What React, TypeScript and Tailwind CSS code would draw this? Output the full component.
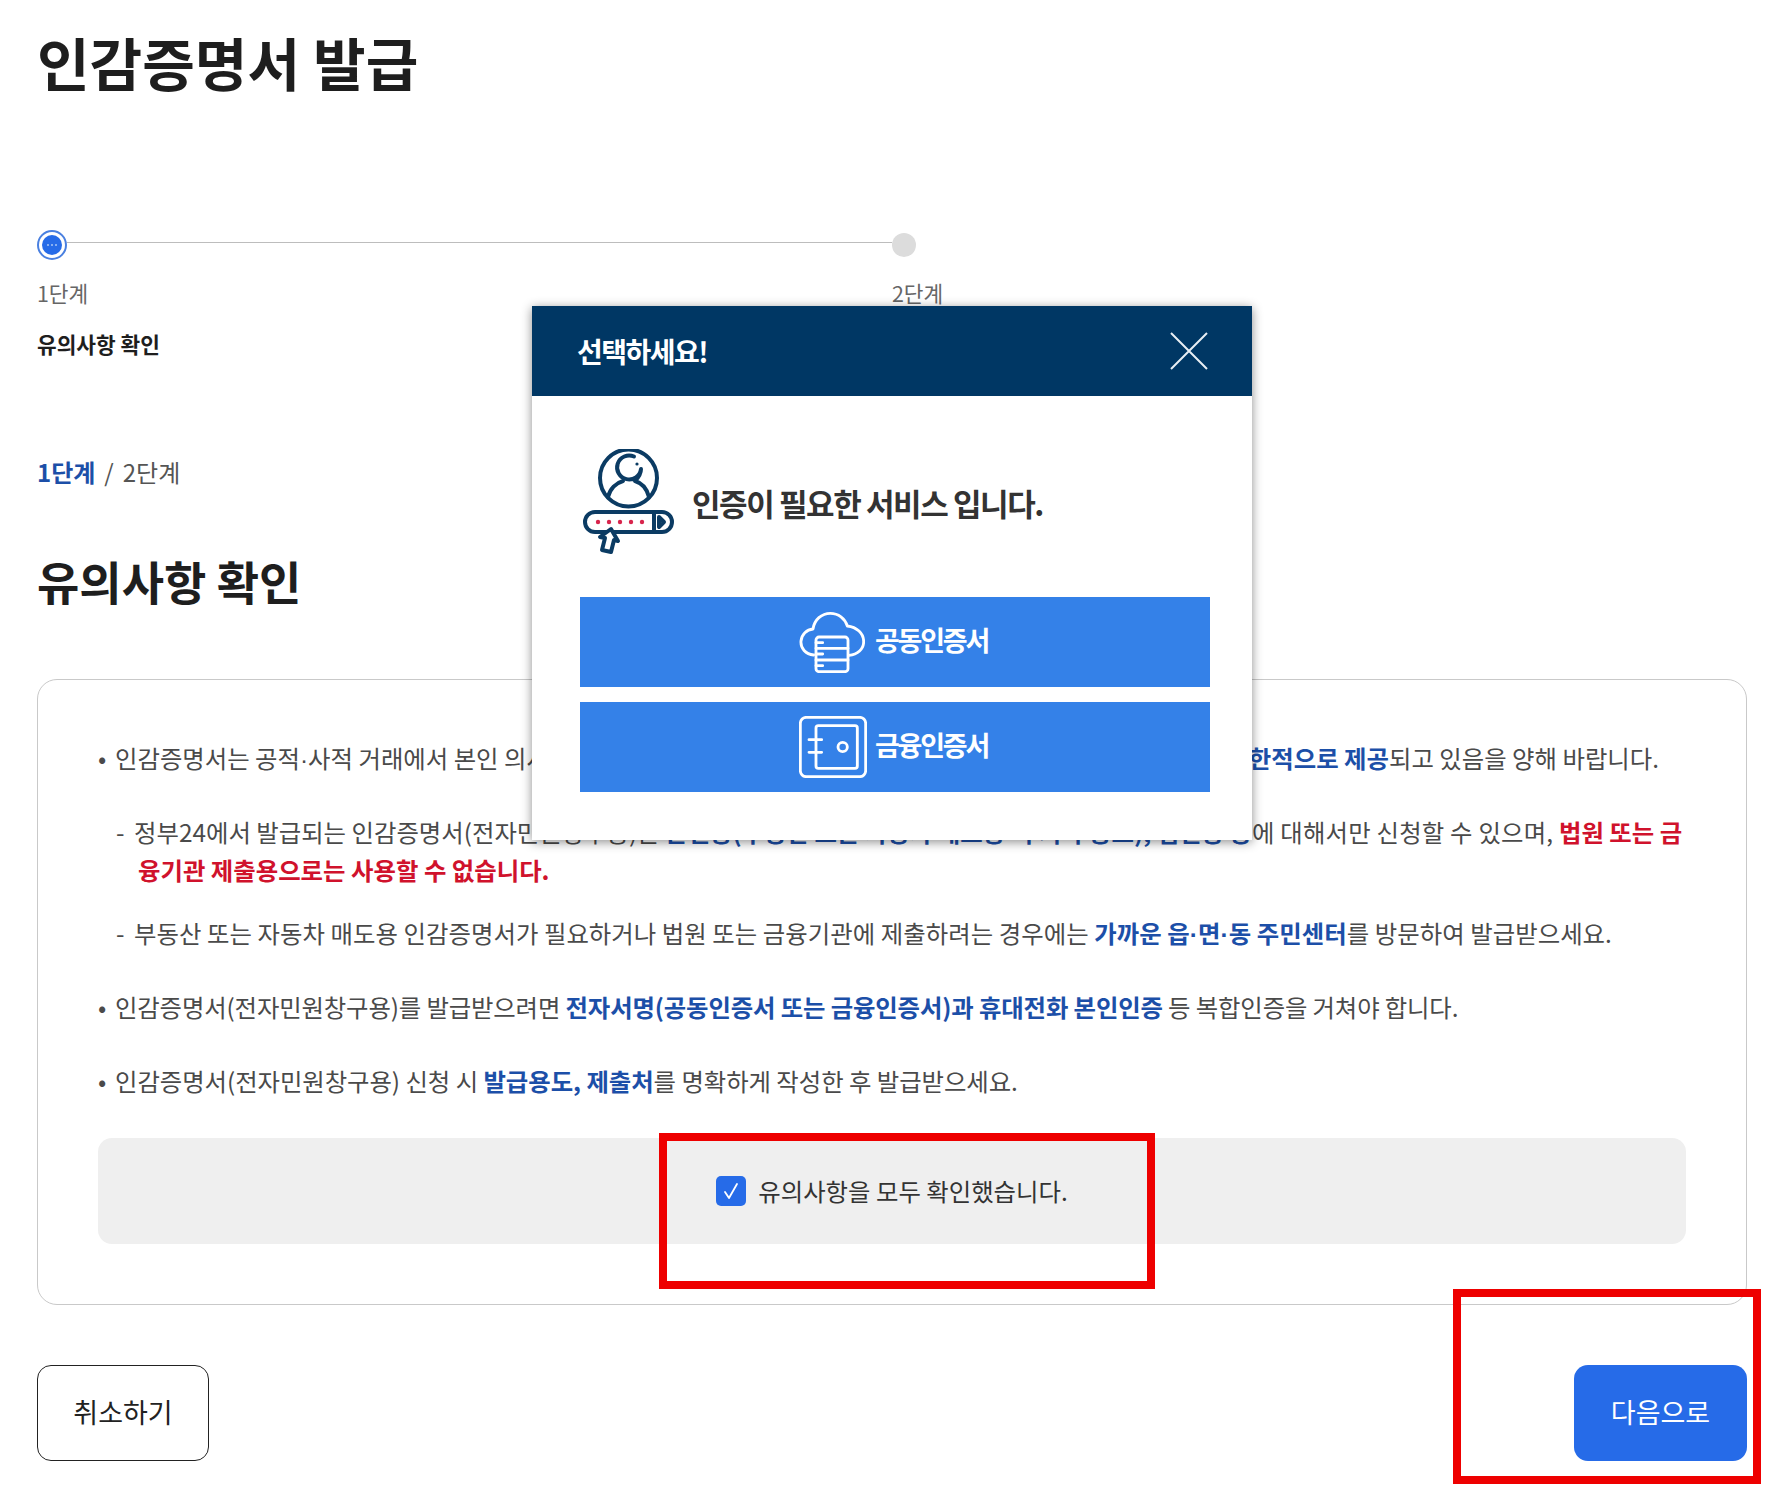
import React from "react";

const font = { fontFamily: '"Noto Sans CJK KR", "Noto Sans", sans-serif' };

function Dot() {
  return <span className="font-['Liberation_Sans'] leading-none">·</span>;
}

function PersonIcon() {
  return (
    <svg width="92" height="108" viewBox="11 10 92 108" fill="none" stroke="#0b3b63" strokeWidth="4" strokeLinecap="round" strokeLinejoin="round">
      <circle cx="57.5" cy="39" r="28.5" />
      <path d="M63 17.5A12 12 0 1 0 70 30c0 5-3 9-6 12 7 2 12 8 14 16" />
      <path d="M52 42c-7 2-13 8-15 16" />
      <circle cx="66" cy="25" r="1.6" fill="#0b3b63" stroke="none" />
      <rect x="14" y="73" width="87" height="20" rx="10" />
      <path d="M83 73v20" />
      <path d="M88 78l5 5-5 5z" />
      <g fill="#d8244c" stroke="none">
        <circle cx="27" cy="83" r="2.2" />
        <circle cx="38" cy="83" r="2.2" />
        <circle cx="49" cy="83" r="2.2" />
        <circle cx="60" cy="83" r="2.2" />
        <circle cx="71" cy="83" r="2.2" />
      </g>
      <path d="M40 90l7 12-4-1-3 12-9-2 3-12-5-1z" fill="#fff" />
    </svg>
  );
}

function CloudIcon() {
  return (
    <svg width="66" height="62" viewBox="24 34 198 186" fill="none" stroke="#fff" strokeWidth="8.5" strokeLinecap="round" strokeLinejoin="round">
      <path d="M68 166C44 164 28 146 30 124c2-20 17-34 36-36 4-28 26-47 52-47 24 0 44 15 51 38 28 3 49 22 49 47 0 22-18 39-44 41" />
      <rect x="75" y="112" width="96" height="104" rx="9" fill="#3481e8" />
      <path d="M75 146h96M75 181h96M75 129h20M75 163h20M75 198h20" />
    </svg>
  );
}

function SafeIcon() {
  return (
    <svg width="68" height="62" viewBox="26 44 204 186" fill="none" stroke="#fff" strokeWidth="8.5" strokeLinecap="round" strokeLinejoin="round">
      <rect x="30" y="48" width="196" height="178" rx="18" />
      <rect x="77" y="73" width="124" height="128" rx="7" />
      <path d="M56 115h38M56 153h38" />
      <circle cx="157" cy="137" r="14" />
    </svg>
  );
}

export default function App() {
  return (
    <div className="relative w-[1789px] h-[1506px] bg-white overflow-hidden" style={font}>
      <div className="pl-[37px] w-[1747px]">
        <h1 className="pt-[29px] text-[57.2px] leading-[64px] font-bold text-[#1e1e1e]">인감증명서 발급</h1>

        <div className="mt-[137px] flex">
          <div className="w-[855px]">
            <div className="flex h-[30px]">
              <div className="w-[30px] h-[30px] shrink-0 rounded-full border-2 border-[#4a80e0] bg-white flex items-center justify-center">
                <div className="w-[20px] h-[20px] rounded-full bg-[#266be8] flex items-center justify-center gap-[2px]">
                  <span className="w-[2px] h-[2px] rounded-full bg-[#a9c6f5]" />
                  <span className="w-[2px] h-[2px] rounded-full bg-[#a9c6f5]" />
                  <span className="w-[2px] h-[2px] rounded-full bg-[#a9c6f5]" />
                </div>
              </div>
              <div className="flex-1 h-px mt-[12px] bg-[#bdbdbd]" />
            </div>
            <p className="mt-[17px] text-[21.4px] leading-[32px] text-[#666]">1단계</p>
            <p className="mt-[19px] text-[21.4px] leading-[32px] font-bold text-[#1e1e1e]">유의사항 확인</p>
          </div>
          <div>
            <div className="h-[30px] pt-[3px]">
              <div className="w-[24px] h-[24px] rounded-full bg-[#dcdcdc]" />
            </div>
            <p className="mt-[17px] text-[21.4px] leading-[32px] text-[#666]">2단계</p>
          </div>
        </div>

        <p className="mt-[94px] text-[24px] leading-[36px] text-[#555]">
          <b className="text-[#1c4fa8]">1단계</b>
          <span className="mx-[9px]">/</span>2단계
        </p>

        <h2 className="mt-[60px] text-[46px] leading-[60px] font-bold text-[#1e1e1e]">유의사항 확인</h2>

        <div className="mt-[69px] h-[626px] border border-[#c9c9c9] rounded-[20px] pt-[59px] px-[60px]">
          <div className="text-[24.4px] leading-[38px] text-[#4a4a4a]">
            <div className="relative pl-[17px] break-all">
              <span className="absolute left-0 top-0">•</span>
              인감증명서는 공적<Dot />사적 거래에서 본인 의사를 확인하는 중요한 수단으로 활용되는 증명서로 현재 온라인 발급은 제<b className="text-[#1c4fa8]">한적으로 제공</b>되고 있음을 양해 바랍니다.
            </div>
            <div className="relative pl-[40px] mt-[36px] break-all">
              <span className="absolute left-[18px] top-0">-</span>
              <span className="-ml-[4px]">정부24에서 발급되는 인감증명서(전자민원창구용)는 </span>
              <b className="text-[#1c4fa8]">본인용(부동산 또는 자동차 매도용 외 기타 용도), 법인용 등</b><span className="tracking-[0.2px]">에 대해서만 신청할 수 있으며, </span><b className="text-[#d0122c]">법원 또는 금융기관 제출용으로는 사용할 수 없습니다.</b>
            </div>
            <div className="relative pl-[36px] mt-[25px] break-all tracking-[0.05px]">
              <span className="absolute left-[18px] top-0">-</span>
              부동산 또는 자동차 매도용 인감증명서가 필요하거나 법원 또는 금융기관에 제출하려는 경우에는 <b className="text-[#1c4fa8]">가까운 읍<Dot />면<Dot />동 주민센터</b>를 방문하여 발급받으세요.
            </div>
            <div className="relative pl-[17px] mt-[36px] tracking-[-0.14px]">
              <span className="absolute left-0 top-0">•</span>
              인감증명서(전자민원창구용)를 발급받으려면 <b className="text-[#1c4fa8]">전자서명(공동인증서 또는 금융인증서)과 휴대전화 본인인증</b> 등 복합인증을 거쳐야 합니다.
            </div>
            <div className="relative pl-[17px] mt-[36px] tracking-[-0.05px]">
              <span className="absolute left-0 top-0">•</span>
              인감증명서(전자민원창구용) 신청 시 <b className="text-[#1c4fa8]">발급용도, 제출처</b>를 명확하게 작성한 후 발급받으세요.
            </div>
          </div>
          <div className="mt-[38px] h-[106px] rounded-[14px] bg-[#efefef] flex justify-center items-start pt-[38px]">
            <div className="flex items-center gap-[12px]">
              <div className="w-[30px] h-[30px] rounded-[5px] bg-[#266be8] flex items-center justify-center">
                <svg width="20" height="22" viewBox="0 0 20 22" fill="none" stroke="#fff" strokeWidth="1.8" strokeLinecap="round" strokeLinejoin="round">
                  <path d="M4 12l4 6 8-14" />
                </svg>
              </div>
              <span className="text-[24.4px] leading-[30px] text-[#333]">유의사항을 모두 확인했습니다.</span>
            </div>
          </div>
        </div>

        <div className="mt-[60px] flex justify-between">
          <button className="w-[172px] h-[96px] pb-[2px] rounded-[14px] border border-[#222] bg-white text-[27px] text-[#222]">취소하기</button>
          <button className="w-[173px] h-[96px] pb-[2px] rounded-[14px] bg-[#266be8] text-[27px] text-white">다음으로</button>
        </div>
      </div>

      <div className="absolute left-[532px] top-[306px] w-[720px] h-[534px] bg-white shadow-[0_2px_10px_rgba(0,0,0,0.45)]">
        <div className="h-[90px] bg-[#003764] flex items-center justify-between pl-[45px] pr-[44px]">
          <span className="text-[28px] font-bold tracking-[-1.5px] text-white">선택하세요!</span>
          <svg width="38" height="38" viewBox="0 0 38 38" stroke="#e8eef4" strokeWidth="2">
            <path d="M1 1l36 36M37 1L1 37" />
          </svg>
        </div>
        <div className="pl-[50px] pt-[54px] flex items-center gap-[18px] h-[160px]">
          <PersonIcon />
          <span className="text-[31px] font-bold tracking-[-1.4px] text-[#333]">인증이 필요한 서비스 입니다.</span>
        </div>
        <div className="mt-[41px] ml-[48px] w-[630px] flex flex-col gap-[15px]">
          <div className="h-[90px] bg-[#3481e8] flex items-center justify-center gap-[10px] pr-[3px]">
            <CloudIcon />
            <span className="pb-[4px] text-[27px] font-bold tracking-[-2.2px] text-white">공동인증서</span>
          </div>
          <div className="h-[90px] bg-[#3481e8] flex items-center justify-center gap-[8px] pr-[3px]">
            <SafeIcon />
            <span className="pb-[4px] text-[27px] font-bold tracking-[-2.2px] text-white">금융인증서</span>
          </div>
        </div>
      </div>

      <div className="absolute left-[659px] top-[1133px] w-[496px] h-[156px] border-8 border-[#ee0000]" />
      <div className="absolute left-[1453px] top-[1289px] w-[308px] h-[195px] border-8 border-[#ee0000]" />
    </div>
  );
}
